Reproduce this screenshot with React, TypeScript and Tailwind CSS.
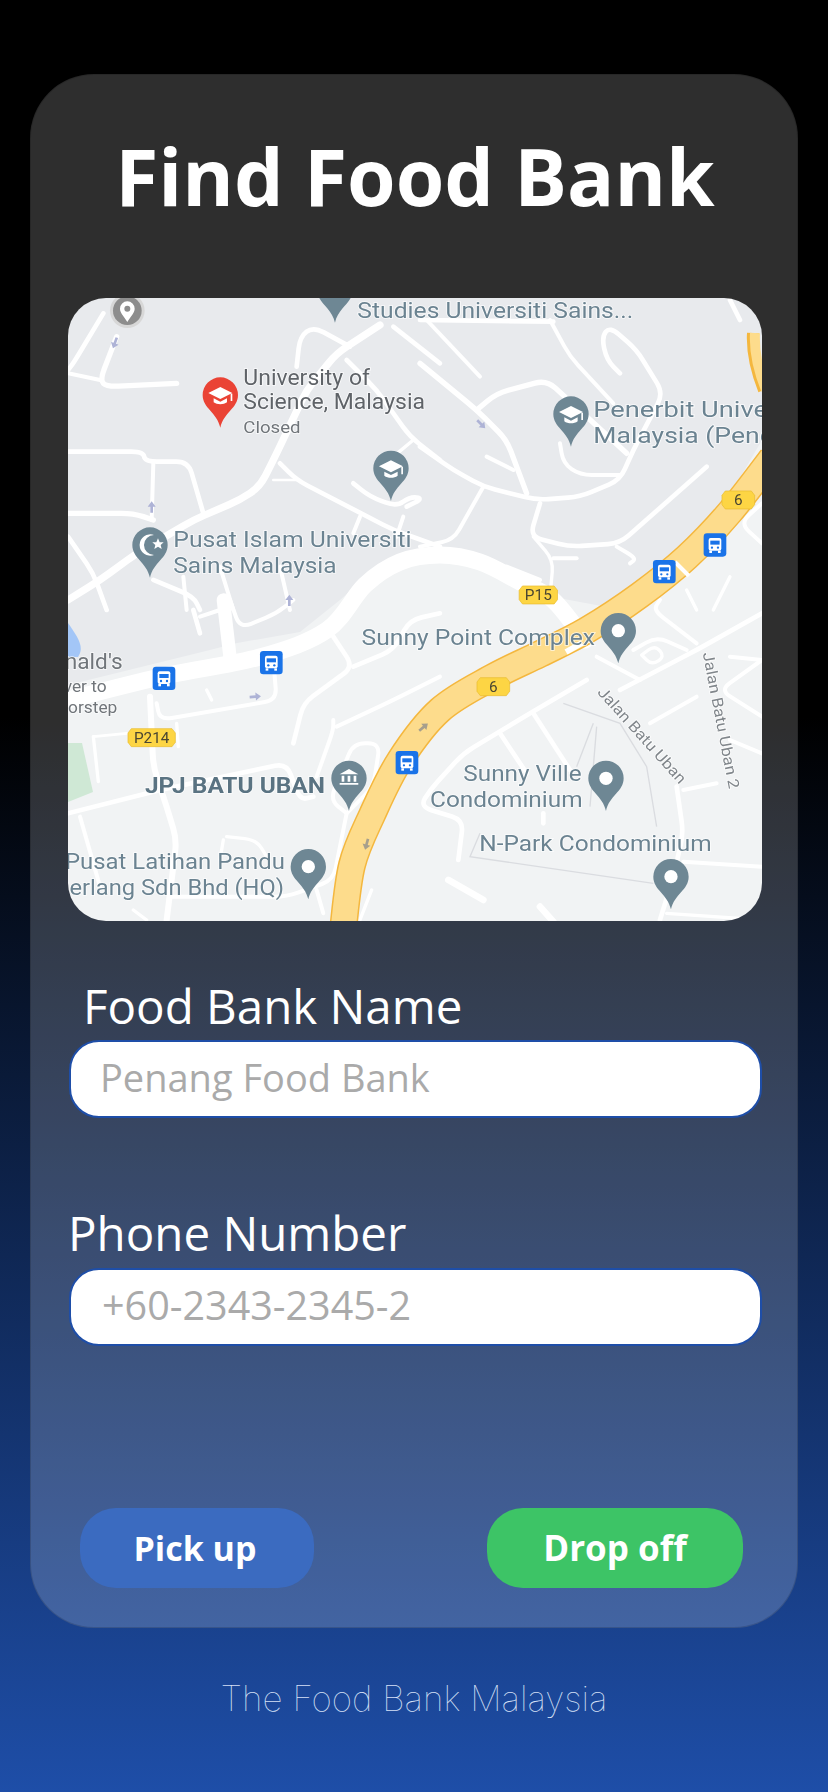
const roadStyle = { fill: 'none', stroke: '#ffffff', strokeLinecap: 'round', strokeLinejoin: 'round' } as const;

// [path, width] in the coordinates of each 3x map tile
const topLeftRoads: [string, number][] = [
  ['M130 70L40 220L24 240', 14],
  ['M170 140L120 270L140 290L350 280', 16],
  ['M24 250L120 270', 12],
  ['M960 105L830 190L740 300L650 490L600 590L540 630L400 690L230 790L120 870L24 930', 22],
  ['M24 485L250 485L255 515L385 515L430 670', 14],
  ['M24 670L220 670L280 690', 16],
  ['M280 520L275 690', 12],
  ['M660 520L710 570L1000 720L1140 770', 14],
  ['M640 570L710 570', 8],
  ['M1140 510L1050 440L950 300L860 210', 14],
  ['M1060 450L1000 500', 10],
  ['M870 170L760 110L720 140L710 230', 14],
  ['M1000 110L1140 220', 14],
  ['M880 580L930 620L1010 650L1050 620L1090 625L1040 650', 14],
  ['M900 680L880 730', 12],
  ['M1030 680L1010 740', 12],
  ['M280 870L400 920L420 960', 14],
  ['M370 860L380 960', 12],
  ['M480 830L520 960', 12],
  ['M660 830L690 960', 12],
  ['M24 740L100 850L140 960', 14],
];

const topRightRoads: [string, number][] = [
  ['M0 220L170 360L260 450L320 610', 16],
  ['M0 470L100 540L190 590L350 630L480 620L600 570L640 480L730 310L650 180L570 110L545 140L560 210L600 250', 14],
  ['M170 360L230 310L380 270L620 490', 16],
  ['M20 90L180 260', 12],
  ['M390 90L450 200L580 340', 12],
  ['M360 640L330 740L450 770L600 760L860 530', 14],
  ['M420 460L430 520L480 555L600 555', 12],
  ['M200 500L280 540', 12],
  ['M190 590L100 750L0 770', 12],
  ['M590 770L650 805L630 820', 12],
  ['M930 30L960 90', 14],
  ['M340 740L400 810L390 920', 10],
  ['M260 830L360 870', 12],
  ['M400 805L470 805', 12],
  ['M0 90L400 95', 14],
  ['M1026 640L960 700L1026 760', 12],
  ['M800 900L830 960', 10],
  ['M930 860L880 960', 10],
];

const bottomLeftRoads: [string, number][] = [
  ['M490 0L510 170', 40],
  ['M400 30L420 100', 14],
  ['M420 50L480 30', 12],
  ['M510 0L540 85L650 40L700 0', 12],
  ['M270 290L280 500L320 620L350 720L320 960', 18],
  ['M290 310L300 360L650 300L640 180', 12],
  ['M440 270L455 300', 10],
  ['M350 370L355 440', 10],
  ['M820 110L880 200L730 310L700 430', 14],
  ['M880 200L1000 150L1050 60L1140 40', 14],
  ['M820 360L820 390L770 530', 12],
  ['M830 380L1000 300L1140 230', 12],
  ['M24 640L300 570L680 490L720 600L760 590', 14],
  ['M60 650L120 860', 12],
  ['M500 710L590 720L620 770', 10],
  ['M490 720L480 780', 10],
  ['M330 890L680 890L820 840L860 640', 12],
  ['M860 640L810 600L880 430L960 430L940 560L860 640', 12],
  ['M770 870L790 940', 12],
  ['M935 870L900 960', 10],
  ['M220 930L260 960', 10],
  ['M100 410L200 400', 8],
  ['M100 410L115 545', 10],
];

const bottomRightRoads: [string, number][] = [
  ['M500 240L330 340L130 460L30 570L0 620L130 660L115 780', 14],
  ['M600 270L830 150L1026 40', 14],
  ['M530 170L660 240', 12],
  ['M640 150L710 110L800 150', 12],
  ['M665 165L705 135L735 170L695 195L665 165', 10],
  ['M830 130L700 30L720 0', 12],
  ['M240 400L320 520', 14],
  ['M340 340L450 510', 14],
  ['M690 370L830 290', 12],
  ['M790 570L890 550', 12],
  ['M770 560L790 700L760 830L720 960', 14],
  ['M790 785L1026 800', 12],
  ['M740 940L1026 960', 10],
  ['M1026 180L930 170', 12],
  ['M1026 350L900 270L1026 180', 12],
  ['M930 420L1026 460', 12],
  ['M85 840L190 900', 20],
  ['M360 920L400 965', 20],
  ['M370 640L370 670', 14],
];

// turn a polyline into a path with softly rounded corners, roads on the map aren't sharp
function soften(d: string, radius = 36) {
  const pts = [...d.matchAll(/(-?\d+) (-?\d+)/g)].map((m) => [Number(m[1]), Number(m[2])]);
  let out = `M${pts[0][0]} ${pts[0][1]}`;
  for (let i = 1; i < pts.length - 1; i++) {
    const [px, py] = pts[i - 1];
    const [cx, cy] = pts[i];
    const [nx, ny] = pts[i + 1];
    const inLen = Math.hypot(cx - px, cy - py);
    const outLen = Math.hypot(nx - cx, ny - cy);
    const a = Math.min(radius, inLen / 2) / inLen;
    const b = Math.min(radius, outLen / 2) / outLen;
    out += `L${cx - (cx - px) * a} ${cy - (cy - py) * a}Q${cx} ${cy} ${cx + (nx - cx) * b} ${cy + (ny - cy) * b}`;
  }
  const last = pts[pts.length - 1];
  return `${out}L${last[0]} ${last[1]}`;
}

// smooth curve through points, used for the highway and the main road
function spline(pts: number[][]) {
  let out = `M${pts[0][0]} ${pts[0][1]}`;
  for (let i = 0; i < pts.length - 1; i++) {
    const p0 = pts[Math.max(i - 1, 0)];
    const p1 = pts[i];
    const p2 = pts[i + 1];
    const p3 = pts[Math.min(i + 2, pts.length - 1)];
    out += `C${p1[0] + (p2[0] - p0[0]) / 6} ${p1[1] + (p2[1] - p0[1]) / 6} ${p2[0] - (p3[0] - p1[0]) / 6} ${p2[1] - (p3[1] - p1[1]) / 6} ${p2[0]} ${p2[1]}`;
  }
  return out;
}

const highway = spline([
  [343, 930],
  [352, 865],
  [372, 815],
  [400, 760],
  [440, 710],
  [493, 677],
  [540, 654],
  [587, 630],
  [640, 595],
  [687, 557],
  [730, 512],
  [772, 458],
]);

const mainRoad = spline([
  [60, 702],
  [160, 677],
  [260, 657],
  [327, 630],
  [365, 585],
  [400, 562],
  [440, 555],
  [480, 562],
  [520, 582],
  [553, 600],
  [585, 640],
]);

function Roads({ list }: { list: [string, number][] }) {
  return (
    <>
      {list.map(([d, width]) => (
        <path key={d} d={soften(d)} strokeWidth={width} {...roadStyle} />
      ))}
    </>
  );
}

function Pin({ x, y, fill = '#6e8794', children }: { x: number; y: number; fill?: string; children?: React.ReactNode }) {
  return (
    <g transform={`translate(${x} ${y})`}>
      <path d="M-53 0A53 53 0 1 1 53 0C53 40 10 52 0 98C-10 52-53 40-53 0Z" fill={fill} />
      {children ?? <circle r="20" fill="#ffffff" />}
    </g>
  );
}

function GradCap() {
  return (
    <g fill="#ffffff">
      <path d="M-36-6L0-24L36-6L0 12Z" />
      <path d="M-20 10L0 20L20 10V22C10 30-10 30-20 22Z" />
      <path d="M31-4H36V18H31Z" />
    </g>
  );
}

function Bus({ x, y }: { x: number; y: number }) {
  return (
    <g transform={`translate(${x} ${y})`}>
      <rect x="-34" y="-35" width="68" height="70" rx="10" fill="#1a73e8" />
      <rect x="-19" y="-21" width="38" height="38" rx="6" fill="#ffffff" />
      <rect x="-14" y="-13" width="28" height="12" fill="#1a73e8" />
      <circle cx="-9" cy="8" r="3.5" fill="#1a73e8" />
      <circle cx="9" cy="8" r="3.5" fill="#1a73e8" />
      <rect x="-17" y="17" width="8" height="7" fill="#ffffff" />
      <rect x="9" y="17" width="8" height="7" fill="#ffffff" />
    </g>
  );
}

function Shield({ x, y, w, label, size = 46 }: { x: number; y: number; w: number; label: string; size?: number }) {
  const h = w / 2;
  return (
    <g transform={`translate(${x} ${y})`}>
      <path
        d={`M${-h + 10} -27H${h - 10}L${h} -14V14L${h - 10} 27H${-h + 10}L${-h} 14V-14Z`}
        fill="#fdd544"
        stroke="#e8bb2e"
        strokeWidth="2"
      />
      <text textAnchor="middle" y="16" fontSize={size} fill="#4a4632">
        {label}
      </text>
    </g>
  );
}

function Arrow({ x, y, rot, color = '#aeb3d6' }: { x: number; y: number; rot: number; color?: string }) {
  return (
    <g transform={`translate(${x} ${y}) rotate(${rot})`} fill={color}>
      <path d="M0-18L12-2H4V16H-4V-2H-12Z" />
    </g>
  );
}

function Label({
  x,
  y,
  text,
  len,
  size = 66,
  fill = '#6b8391',
  anchor,
  weight,
}: {
  x: number;
  y: number;
  text: string;
  len?: number;
  size?: number;
  fill?: string;
  anchor?: 'end';
  weight?: number;
}) {
  return (
    <text
      x={x}
      y={y}
      fontSize={size}
      fill={fill}
      fontWeight={weight}
      textAnchor={anchor}
      textLength={len}
      lengthAdjust={len ? 'spacingAndGlyphs' : undefined}
      stroke="#ffffff"
      strokeOpacity="0.75"
      strokeWidth="5"
      paintOrder="stroke"
    >
      {text}
    </text>
  );
}

function MapView() {
  return (
    <svg viewBox="68 298 694 623" className="block w-full h-full blur-[0.6px] font-['Roboto',sans-serif]">
      <rect x="68" y="298" width="694" height="623" fill="#f1f3f4" />
      <path
        d="M68 298H762V440L730 495L680 555L607 607L553 597L470 557L420 553L377 567L340 600L300 632L237 643L210 650L68 685Z"
        fill="#e8eaed"
      />
      <path d="M68 743H82L93 792L68 802Z" fill="#cfe8d5" />
      <path d="M68 623C80 640 84 648 78 657H68Z" fill="#a3c6f7" />

      {/* thin grey service lanes */}
      <g transform="translate(420 600) scale(0.3333)" fill="none" stroke="#dadce0" strokeWidth="4">
        <path d="M430 310L600 370L680 500L710 680" />
        <path d="M520 370L470 500" />
        <path d="M530 380L510 620" />
        <path d="M180 700L150 770L700 850" />
      </g>

      <path d={mainRoad} strokeWidth="17" {...roadStyle} />
      <g transform="translate(60 290) scale(0.3333)">
        <Roads list={topLeftRoads} />
      </g>
      <g transform="translate(420 290) scale(0.3333)">
        <Roads list={topRightRoads} />
      </g>
      <g transform="translate(60 600) scale(0.3333)">
        <Roads list={bottomLeftRoads} />
      </g>
      <g transform="translate(420 600) scale(0.3333)">
        <Roads list={bottomRightRoads} />
      </g>

      {/* highway */}
      <g fill="none" strokeLinejoin="round">
        <path d={highway} stroke="#f4b73e" strokeWidth="28" />
        <path d={highway} stroke="#fddc8c" strokeWidth="25" />
        <path d="M753 333C752 350 756 370 764 390" stroke="#f4b73e" strokeWidth="12" />
        <path d="M755 333C754 350 758 370 766 390" stroke="#fddc8c" strokeWidth="10" />
      </g>
      <path d="M675 562L689 576" stroke="#ffffff" strokeWidth="4" />
      <path d="M566 652L582 643" stroke="#ffffff" strokeWidth="6" />

      <g transform="translate(60 290) scale(0.3333)">
        <circle cx="202" cy="62" r="52" fill="#d7d7d7" />
        <circle cx="202" cy="62" r="43" fill="#8d8d8d" />
        <path d="M202 96C190 76 180 68 180 56A22 22 0 1 1 224 56C224 68 214 76 202 96Z" fill="#ffffff" />
        <circle cx="202" cy="56" r="9" fill="#8d8d8d" />
        <Arrow x={165} y={158} rot={200} />
        <Arrow x={275} y={652} rot={0} />
        <Arrow x={688} y={932} rot={0} />

        <Pin x={481} y={315} fill="#ea4335">
          <GradCap />
        </Pin>
        <Pin x={993} y={535}>
          <GradCap />
        </Pin>
        <Pin x={825} y={0} />
        <Pin x={270} y={765}>
          <path d="M12-30A32 32 0 1 0 12 30A26 26 0 1 1 12-30Z" fill="#ffffff" />
          <path d="M24-20L29-8L41-8L32 0L35 12L24 5L13 12L16 0L7-8L19-8Z" fill="#ffffff" />
        </Pin>

        <Label x={892} y={85} text="Studies Universiti Sains..." len={828} />
        <Label x={550} y={285} text="University of" len={380} fill="#5f6368" />
        <Label x={550} y={358} text="Science, Malaysia" len={545} fill="#5f6368" />
        <Label x={550} y={428} text="Closed" len={172} size={50} fill="#70757a" />
        <Label x={340} y={770} text="Pusat Islam Universiti" len={715} />
        <Label x={340} y={850} text="Sains Malaysia" len={490} />
      </g>

      <g transform="translate(420 290) scale(0.3333)">
        <Arrow x={183} y={402} rot={135} />
        <Pin x={453} y={372}>
          <GradCap />
        </Pin>
        <Label x={520} y={380} text="Penerbit Universiti" len={660} />
        <Label x={520} y={460} text="Malaysia (Penerbit)" len={686} />
        <Shield x={955} y={630} w={98} label="6" />
        <Shield x={355} y={915} w={115} label="P15" />
        <Bus x={885} y={765} />
        <Bus x={733} y={845} />
      </g>

      <g transform="translate(60 600) scale(0.3333)">
        <Arrow x={585} y={290} rot={85} />
        <Arrow x={1090} y={382} rot={50} color="#a79f8c" />
        <Arrow x={920} y={732} rot={195} color="#a79f8c" />
        <Bus x={312} y={235} />
        <Bus x={634} y={188} />
        <Bus x={1041} y={488} />
        <Shield x={275} y={413} w={142} label="P214" />
        <Pin x={867} y={535}>
          <path d="M0-28L28-12H-28Z" fill="#ffffff" />
          <path d="M-22-8H-14V10H-22ZM-4-8H4V10H-4ZM14-8H22V10H14ZM-28 14H28V19H-28Z" fill="#ffffff" />
        </Pin>
        <Pin x={745} y={800} />
        <Label x={188} y={208} text="McDonald's" size={68} anchor="end" fill="#70757a" />
        <Label x={140} y={275} text="Deliver to" size={52} anchor="end" fill="#70757a" />
        <Label x={172} y={338} text="doorstep" size={52} anchor="end" fill="#70757a" />
        <Label x={255} y={578} text="JPJ BATU UBAN" len={540} weight={700} fill="#5a7382" />
        <Label x={15} y={808} text="Pusat Latihan Pandu" len={660} />
        <Label x={-20} y={885} text="Gerlang Sdn Bhd (HQ)" len={692} />
        <Label x={905} y={135} text="Sunny Point Complex" len={700} />
      </g>

      <g transform="translate(420 600) scale(0.3333)">
        <Shield x={220} y={260} w={98} label="6" />
        <Pin x={595} y={92} />
        <Pin x={558} y={535} />
        <Pin x={753} y={830} />
        <Label x={130} y={542} text="Sunny Ville" len={355} />
        <Label x={30} y={620} text="Condominium" len={458} />
        <Label x={178} y={752} text="N-Park Condominium" len={697} />
        <g transform="translate(530 278) rotate(48)">
          <Label x={0} y={0} text="Jalan Batu Uban" len={372} size={46} fill="#80868b" />
        </g>
        <g transform="translate(848 160) rotate(79)">
          <Label x={0} y={0} text="Jalan Batu Uban 2" len={416} size={46} fill="#80868b" />
        </g>
      </g>
    </svg>
  );
}

export default function App() {
  return (
    <div className="w-[828px] h-[1792px] overflow-hidden bg-[linear-gradient(180deg,#000000_0%,#000000_40%,#1e4ea8_100%)] font-['Open_Sans',sans-serif] text-white">
      <div className="ml-[30px] mt-[74px] w-[768px] h-[1554px] rounded-[64px] border border-black/15 bg-white/[0.18] pl-[37px] pr-[35px] pt-[51px]">
        <h1 className="text-center text-[78.5px] leading-[100px] font-bold">Find Food Bank</h1>

        <div className="mt-[72px] h-[623px] overflow-hidden rounded-[38px]">
          <MapView />
        </div>

        <label className="mt-[55px] ml-[15px] block text-[47.5px] leading-[60px]">Food Bank Name</label>
        <input
          readOnly
          placeholder="Penang Food Bank"
          className="ml-[1px] mt-[4px] block h-[78px] w-[693px] rounded-[30px] border-2 border-[#1e4ea8] bg-white pl-[29px] pb-[4px] text-[38px] text-black outline-none placeholder:text-[#aaaaaa]"
        />

        <label className="mt-[85px] block text-[47.5px] leading-[60px]">Phone Number</label>
        <input
          readOnly
          placeholder="+60-2343-2345-2"
          className="ml-[1px] mt-[5px] block h-[78px] w-[693px] rounded-[30px] border-2 border-[#1e4ea8] bg-white pl-[31px] pb-[4px] text-[39.5px] text-black outline-none placeholder:text-[#aaaaaa]"
        />

        <div className="mt-[162px] flex justify-between pl-[12px] pr-[19px]">
          <button className="h-[80px] w-[234px] rounded-[36px] bg-[#3b6bc0] pr-[4px] text-[34px] font-bold">Pick up</button>
          <button className="h-[80px] w-[256px] rounded-[36px] bg-[#3dc466] text-[35px] font-bold">Drop off</button>
        </div>
      </div>

      <p className="mt-[50px] text-center text-[35px] leading-[40px] font-thin font-['Inter',sans-serif] text-[#d6e0f6]">
        The Food Bank Malaysia
      </p>
    </div>
  );
}
